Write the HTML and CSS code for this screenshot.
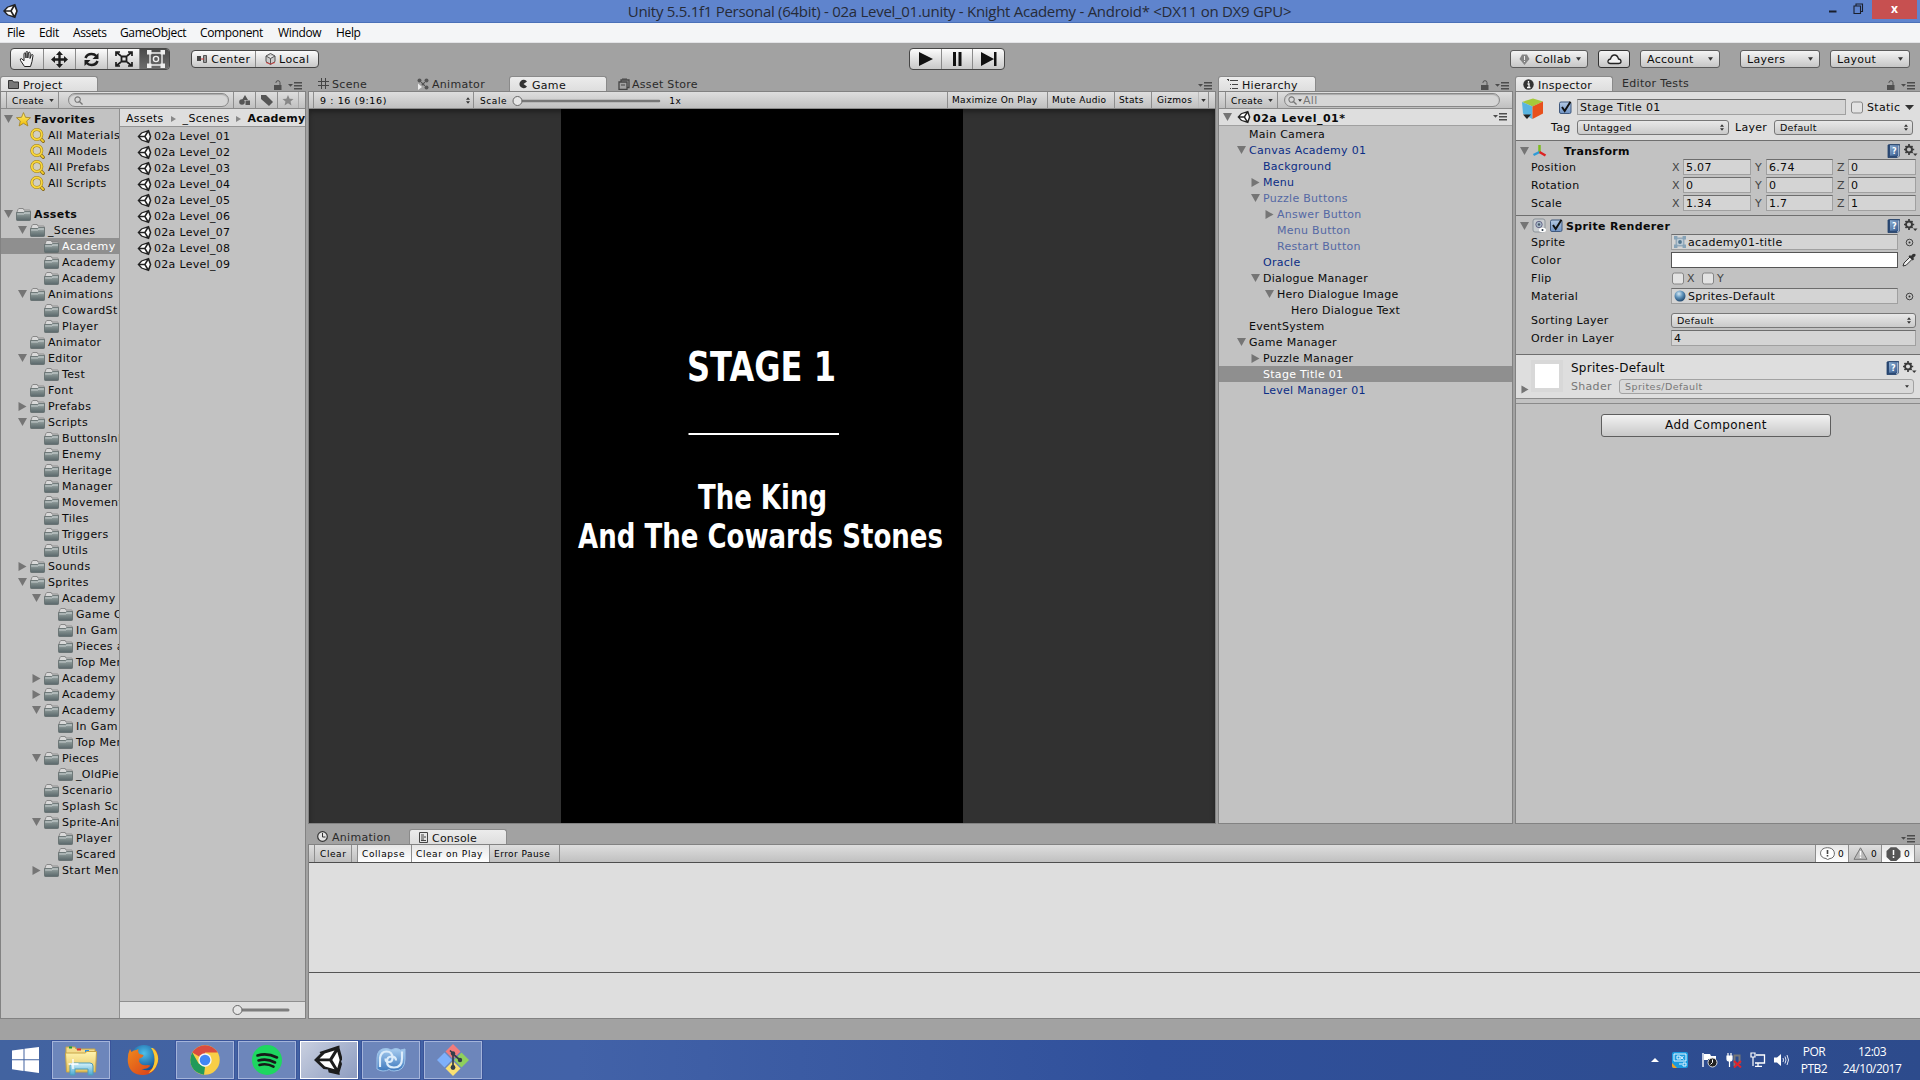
FILE: index.html
```html
<!DOCTYPE html>
<html lang="en">
<head>
<meta charset="utf-8">
<title>Unity 5.5.1f1 Personal (64bit) - Knight Academy</title>
<link rel="stylesheet" href="styles.css">
</head>
<body>
<svg class="defs" width="0" height="0">
  <defs>
    <linearGradient id="gFolder" x1="0" y1="0" x2="0" y2="1"><stop offset="0" stop-color="#a9b3b3"/><stop offset=".5" stop-color="#7b8888"/><stop offset="1" stop-color="#59676a"/></linearGradient>
    <linearGradient id="gStar" x1="0" y1="0" x2="0" y2="1"><stop offset="0" stop-color="#fff27a"/><stop offset="1" stop-color="#f0b800"/></linearGradient>
    <linearGradient id="gCheck" x1="0" y1="0" x2="0" y2="1"><stop offset="0" stop-color="#b4c9e4"/><stop offset="1" stop-color="#6f93c4"/></linearGradient>
    <radialGradient id="gBall" cx=".4" cy=".3" r=".7"><stop offset="0" stop-color="#d4e8f4"/><stop offset=".5" stop-color="#5f93bb"/><stop offset="1" stop-color="#234a70"/></radialGradient>
    <linearGradient id="gBook" x1="0" y1="0" x2="1" y2="1"><stop offset="0" stop-color="#8fb0d4"/><stop offset="1" stop-color="#34588c"/></linearGradient>
    <linearGradient id="gPaper" x1="0" y1="0" x2="0" y2="1"><stop offset="0" stop-color="#fff3b0"/><stop offset="1" stop-color="#e5c45c"/></linearGradient>
    <radialGradient id="gGlobe" cx=".5" cy=".3" r=".7"><stop offset="0" stop-color="#4cc0ea"/><stop offset="1" stop-color="#0b3c86"/></radialGradient>
    <linearGradient id="gFox" x1="0" y1="0" x2="1" y2="1"><stop offset="0" stop-color="#f08a1c"/><stop offset="1" stop-color="#d8391a"/></linearGradient>
    <linearGradient id="gMono" x1="0" y1="0" x2="0" y2="1"><stop offset="0" stop-color="#a8cdf0"/><stop offset="1" stop-color="#3d78bd"/></linearGradient>
    <linearGradient id="gTable" x1="0" y1="0" x2="0" y2="1"><stop offset="0" stop-color="#d6f3fb"/><stop offset="1" stop-color="#4aa8cf"/></linearGradient>
  </defs>
  <symbol id="folder" viewBox="0 0 15 13"><path d="M1 4 2 1.500 2.800.5h4.400l.8 1.600h5.400q.9 0 .9 1V5H1z" fill="#d9d9d9" stroke="#777" stroke-width=".8"/><path d="M.5 4.500h7L8.600 3.500h5.900v8.200q0 .8-.8.8H1.300q-.8 0-.8-.8z" fill="url(#gFolder)" stroke="#5f6b6b" stroke-width=".8"/><path d="M1.200 6h6.500l1.200-.9h5" stroke="#cfd6d6" stroke-width=".8" fill="none"/></symbol>
  <symbol id="down" viewBox="0 0 9 8"><path d="M0 0h9L4.500 8z" fill="#757575"/></symbol>
  <symbol id="right" viewBox="0 0 9 9"><path d="M.5 0 8.500 4.500.5 9z" fill="#757575"/></symbol>
  <symbol id="find" viewBox="0 0 15 15"><path d="m9.500 9.500 3.800 3.800" stroke="#8a6a14" stroke-width="3.200" stroke-linecap="round"/><path d="m9.500 9.500 3.600 3.600" stroke="#f5cf2e" stroke-width="1.800" stroke-linecap="round"/><circle cx="6.800" cy="6.500" r="5" fill="#d2cfc2" stroke="#9a7a1c" stroke-width="3"/><circle cx="6.800" cy="6.500" r="5" fill="none" stroke="#f8d63b" stroke-width="1.900"/></symbol>
  <symbol id="star" viewBox="0 0 15 15"><path d="m7.500.6 2 4.700 5 .4-3.800 3.300 1.200 5-4.400-2.700L3.100 14l1.200-5L.5 5.700l5-.4z" fill="url(#gStar)" stroke="#a08223" stroke-width=".8"/></symbol>
  <symbol id="unity" viewBox="0 0 16 16"><path d="M.5 8 4.500 3.700 12.800.8 15.300 8l-2.500 7.200-8.300-2.900z" fill="#222"/><path d="M3.200 7.200 5.700 4.600l4.600-1.300-2.400 3.900zM3.200 8.800h4.700l2.400 3.900-4.600-1.300zM9.400 8l2.600-4.200L13.600 8 12 12.200z" fill="#fff"/></symbol>
  <symbol id="unitybig" viewBox="0 0 30 30"><path d="M0 15 6.500 8.500 5.500 7 23.500 1 25.500.5V3L28 12v3L27 16l1 3-2.500 8.500.2 2.500-11-2.500-.7-3L9.500 24z" fill="#1c1c1c"/><path d="M5.500 13.500 10.800 8.500 20.500 5.500 15.500 13.500zM5.500 16.300h10l5 8-9.500-2.700zM18.300 15l5-8.300L25.600 15l-2.300 8.300z" fill="#fff"/></symbol>
  <symbol id="lock" viewBox="0 0 8 10"><path d="M0 5h7.500v5H0z" fill="#4f4f4f"/><path d="M2 3V2.500Q2 .7 4 .7t2 2V5" stroke="#4f4f4f" fill="none"/></symbol>
  <symbol id="pmenu" viewBox="0 0 14 8"><path d="M0 2h5L2.500 4.800zM6 0h8v1.500H6zM6 3h8v1.500H6zM6 6h8v1.500H6z" fill="#4c4c4c"/></symbol>
  <symbol id="updn" viewBox="0 0 5 8"><path d="M0 3 2.500 0 5 3zM0 5l2.500 3L5 5z" fill="#333"/></symbol>
  <symbol id="tri" viewBox="0 0 6 4"><path d="M0 0h6L3 4z" fill="#333"/></symbol>
  <symbol id="lens" viewBox="0 0 10 10"><circle cx="4" cy="4" r="3" fill="none" stroke="#777" stroke-width="1.200"/><path d="m6.300 6.300 3.200 3.200" stroke="#777" stroke-width="1.500"/></symbol>
  <symbol id="book" viewBox="0 0 13 14"><path d="M1 1 4 .3h8.500V12L10 13.700H1z" fill="#2c4a75" stroke="#223f68" stroke-width=".8"/><path d="M3 1.200h8.800v10.500H3z" fill="url(#gBook)"/><path d="M11.800 1.500V12L10 13.200" stroke="#e4ebf3" stroke-width=".8" fill="none"/><text x="7.200" y="9.500" text-anchor="middle" class="help-q">?</text></symbol>
  <symbol id="gear" viewBox="0 0 14 13"><circle cx="5" cy="5.500" r="3" fill="none" stroke="#3a3a3a" stroke-width="1.900"/><path d="M5 0v2.500M5 8.500V11M0 5.500h2M8 5.500h2.200M1.500 2 3 3.500M7 7.500 8.600 9M8.500 2 7 3.500M3 7.500 1.500 9" stroke="#3a3a3a" stroke-width="1.700"/><path d="M9 9.500h4.500L11.200 12z" fill="#3a3a3a"/></symbol>
  <symbol id="on" viewBox="0 0 13 13"><rect x=".5" y="1" width="11.500" height="11.500" rx="1.500" fill="url(#gCheck)" stroke="#3f587d"/><path d="m3 6 2.700 4L11.500.8" stroke="#111" stroke-width="2" fill="none"/></symbol>
  <symbol id="off" viewBox="0 0 13 13"><rect x=".5" y="1" width="11" height="11" rx="2" fill="#e3e3e3" stroke="#858585"/></symbol>
  <symbol id="sprite" viewBox="0 0 14 14"><path d="M2.500 2.500h9v9h-9z" fill="#bccbd6" stroke="#7590a6"/><path d="M0 0h4v4H0zM10 0h4v4h-4zM0 10h4v4H0zM10 10h4v4h-4z" fill="#86a3b8"/><circle cx="7" cy="7" r="2.200" fill="#51758f"/></symbol>
  <symbol id="pick" viewBox="0 0 9 9"><circle cx="4.500" cy="4.500" r="3.300" fill="none" stroke="#333" stroke-width=".9"/><circle cx="4.500" cy="4.500" r="1" fill="#333"/></symbol>
</svg>

<header class="titlebar">
  <svg class="t-logo" width="17" height="16"><use href="#unity"/></svg>
  <h1>Unity 5.5.1f1 Personal (64bit) - 02a Level_01.unity - Knight Academy - Android* &lt;DX11 on DX9 GPU&gt;</h1>
  <svg class="win" width="45" height="23" viewBox="0 0 45 23"><path d="M2 11.500h7.500" stroke="#1a1f2c" stroke-width="2"/><path d="M27 6h6.500v7.500H27zM29 6V4h6.500v7.500h-2" fill="none" stroke="#1a1f2c" stroke-width="1.100"/></svg>
  <span class="close">x</span>
</header>
<nav class="menubar"><span class="m1">File</span><span class="m2">Edit</span><span class="m3">Assets</span><span class="m4">GameObject</span><span class="m5">Component</span><span class="m6">Window</span><span>Help</span></nav>

<div class="toolbar">
  <div class="group tools">
    <b><svg width="18" height="17" viewBox="0 0 18 17"><path d="M5.500 15.500 1.500 9.500 1.300 8l1.200-.4L5 9.800V3q0-1 .8-1t.9 1l.3 4V1.500q0-1 .9-1t.9 1V7l.6-5q.2-.8 1-.8t.8 1L11 7.500 12.300 4q.4-.8 1.100-.5t.6 1.100L13 10.500l-1.500 5z" fill="#f4f4f4" stroke="#222"/></svg></b>
    <b><svg width="17" height="17" viewBox="0 0 17 17"><path d="M8.500 0 12 4H9.700v3.300H13V5l4 3.500-4 3.500V9.700H9.700V13H12l-3.500 4L5 13h2.300V9.700H4V12L0 8.500 4 5v2.300h3.300V4H5z" fill="#1d1d1d"/></svg></b>
    <b><svg width="17" height="15" viewBox="0 0 17 15"><path d="M2.500 6Q4 2 8.500 2q3 0 4.800 2M14.500 9Q13 13 8.500 13q-3 0-4.800-2" fill="none" stroke="#1d1d1d" stroke-width="2.600"/><path d="M15.500 1v6h-6zM1.500 14V8h6z" fill="#1d1d1d"/></svg></b>
    <b><svg width="18" height="16" viewBox="0 0 18 16"><path d="M6.500 5.500h5v5h-5z" fill="none" stroke="#1d1d1d" stroke-width="1.800"/><path d="M1 5V1h4M1 1l5 4M17 5V1h-4M17 1l-5 4M1 11v4h4M1 15l5-4M17 11v4h-4M17 15l-5-4" fill="none" stroke="#1d1d1d" stroke-width="1.700"/></svg></b>
    <b class="sel"><svg width="18" height="18" viewBox="0 0 18 18"><path d="M3 3h12v12H3z" fill="none" stroke="#eee" stroke-width="1.400"/><path d="M0 0h4.500v4.500H0zM13.500 0H18v4.500h-4.500zM0 13.500h4.500V18H0zM13.500 13.500H18V18h-4.500z" fill="#eee"/><circle cx="9" cy="9" r="2.600" fill="none" stroke="#eee" stroke-width="1.400"/></svg></b>
  </div>
  <div class="group pivot">
    <b><svg width="11" height="9" viewBox="0 0 11 9"><path d="M0 1h4v5H0z" fill="#444"/><path d="M6.500.5h3v7h-3z" fill="#999" stroke="#555"/><path d="M4 4h3" stroke="#c33"/></svg>Center</b>
    <b><svg width="11" height="12" viewBox="0 0 11 12"><path d="M5.500.5 10 3v5.500l-4.500 3L1 8.500V3zM1 3l4.500 2.500L10 3M5.500 5.500v6" fill="#ccc" stroke="#555"/><path d="M1 9.500q4.500 3 9 0" stroke="#c44" fill="none"/></svg>Local</b>
  </div>
  <div class="group play">
    <b><svg width="15" height="14"><path d="M1 0 15 7 1 14z" fill="#111"/></svg></b>
    <b><svg width="10" height="14"><path d="M1 0h3v14H1zM6.500 0h3v14h-3z" fill="#111"/></svg></b>
    <b><svg width="16" height="14"><path d="M0 0 13 7 0 14zM13 0h2.500v14H13z" fill="#111"/></svg></b>
  </div>
  <div class="drops">
    <span class="drop collab"><svg width="11" height="11" viewBox="0 0 11 11"><path d="M5.500 11 .5 5 3 .5h5L10.500 5z" fill="#858585"/><path d="M5.500 2v4M5.500 7v1" stroke="#eee"/></svg>Collab<svg width="5" height="4"><use href="#tri"/></svg></span>
    <span class="drop cloud"><svg width="15" height="11" viewBox="0 0 15 11"><path d="M3.500 9.500q-3-.2-2.500-2.500.5-1.800 2.500-2Q4.500 1 7.500 1q3 0 4 4 2.500.3 2.500 2.500 0 2-2.500 2z" fill="#f2f2f2" stroke="#222" stroke-width="1.300"/></svg></span>
    <span class="drop wide acc">Account<svg width="5" height="4"><use href="#tri"/></svg></span>
    <span class="drop wide lay">Layers<svg width="5" height="4"><use href="#tri"/></svg></span>
    <span class="drop wide">Layout<svg width="5" height="4"><use href="#tri"/></svg></span>
  </div>
</div>

<main class="work">
  <section class="dock project">
    <div class="tabs">
      <span class="tab active"><svg width="11" height="9" viewBox="0 0 11 9"><path d="M.5 8.500v-8h4l1 1.500h5v6.500z" fill="#777" stroke="#333"/></svg>Project</span>
      <span class="ends"><svg width="8" height="10"><use href="#lock"/></svg><svg width="14" height="8"><use href="#pmenu"/></svg></span>
    </div>
    <div class="panel">
      <div class="bar">
        <span class="btn create">Create<svg width="5" height="3"><use href="#tri"/></svg></span>
        <span class="search"><svg width="9" height="9"><use href="#lens"/></svg></span>
        <span class="btn ico"><svg width="12" height="11" viewBox="0 0 12 11"><path d="M6 0 3 5h6zM6.500 5.500h4.500V10H6.500z" fill="#555"/><circle cx="3" cy="7" r="2.800" fill="#555"/></svg></span>
        <span class="btn ico"><svg width="12" height="11" viewBox="0 0 12 11"><path d="M0 0h5l7 7-4 4-8-7z" fill="#555"/></svg></span>
        <span class="btn ico last"><svg width="12" height="11" viewBox="0 0 15 15"><path d="m7.500 0 2.200 5 5.300.4-4 3.500 1.200 5.300L7.500 11.400l-4.700 2.800L4 8.900 0 5.400 5.300 5z" fill="#888"/></svg></span>
      </div>
      <div class="split">
        <div class="tree">
          <div class="row l0 bold"><i><svg width="9" height="8"><use href="#down"/></svg></i><svg class="ic" width="15" height="15"><use href="#star"/></svg>Favorites</div>
          <div class="row l1"><i></i><svg class="ic" width="15" height="15"><use href="#find"/></svg>All Materials</div>
          <div class="row l1"><i></i><svg class="ic" width="15" height="15"><use href="#find"/></svg>All Models</div>
          <div class="row l1"><i></i><svg class="ic" width="15" height="15"><use href="#find"/></svg>All Prefabs</div>
          <div class="row l1 gapafter"><i></i><svg class="ic" width="15" height="15"><use href="#find"/></svg>All Scripts</div>
          <div class="row l0 bold"><i><svg width="9" height="8"><use href="#down"/></svg></i><svg class="ic" width="15" height="13"><use href="#folder"/></svg>Assets</div>
          <div class="row l1"><i><svg width="9" height="8"><use href="#down"/></svg></i><svg class="ic" width="15" height="13"><use href="#folder"/></svg>_Scenes</div>
          <div class="row l2 selected"><i></i><svg class="ic" width="15" height="13"><use href="#folder"/></svg>Academy</div>
          <div class="row l2"><i></i><svg class="ic" width="15" height="13"><use href="#folder"/></svg>Academy</div>
          <div class="row l2"><i></i><svg class="ic" width="15" height="13"><use href="#folder"/></svg>Academy</div>
          <div class="row l1"><i><svg width="9" height="8"><use href="#down"/></svg></i><svg class="ic" width="15" height="13"><use href="#folder"/></svg>Animations</div>
          <div class="row l2"><i></i><svg class="ic" width="15" height="13"><use href="#folder"/></svg>CowardSt</div>
          <div class="row l2"><i></i><svg class="ic" width="15" height="13"><use href="#folder"/></svg>Player</div>
          <div class="row l1"><i></i><svg class="ic" width="15" height="13"><use href="#folder"/></svg>Animator</div>
          <div class="row l1"><i><svg width="9" height="8"><use href="#down"/></svg></i><svg class="ic" width="15" height="13"><use href="#folder"/></svg>Editor</div>
          <div class="row l2"><i></i><svg class="ic" width="15" height="13"><use href="#folder"/></svg>Test</div>
          <div class="row l1"><i></i><svg class="ic" width="15" height="13"><use href="#folder"/></svg>Font</div>
          <div class="row l1"><i><svg width="9" height="9"><use href="#right"/></svg></i><svg class="ic" width="15" height="13"><use href="#folder"/></svg>Prefabs</div>
          <div class="row l1"><i><svg width="9" height="8"><use href="#down"/></svg></i><svg class="ic" width="15" height="13"><use href="#folder"/></svg>Scripts</div>
          <div class="row l2"><i></i><svg class="ic" width="15" height="13"><use href="#folder"/></svg>ButtonsInM</div>
          <div class="row l2"><i></i><svg class="ic" width="15" height="13"><use href="#folder"/></svg>Enemy</div>
          <div class="row l2"><i></i><svg class="ic" width="15" height="13"><use href="#folder"/></svg>Heritage</div>
          <div class="row l2"><i></i><svg class="ic" width="15" height="13"><use href="#folder"/></svg>Manager</div>
          <div class="row l2"><i></i><svg class="ic" width="15" height="13"><use href="#folder"/></svg>Movement</div>
          <div class="row l2"><i></i><svg class="ic" width="15" height="13"><use href="#folder"/></svg>Tiles</div>
          <div class="row l2"><i></i><svg class="ic" width="15" height="13"><use href="#folder"/></svg>Triggers</div>
          <div class="row l2"><i></i><svg class="ic" width="15" height="13"><use href="#folder"/></svg>Utils</div>
          <div class="row l1"><i><svg width="9" height="9"><use href="#right"/></svg></i><svg class="ic" width="15" height="13"><use href="#folder"/></svg>Sounds</div>
          <div class="row l1"><i><svg width="9" height="8"><use href="#down"/></svg></i><svg class="ic" width="15" height="13"><use href="#folder"/></svg>Sprites</div>
          <div class="row l2"><i><svg width="9" height="8"><use href="#down"/></svg></i><svg class="ic" width="15" height="13"><use href="#folder"/></svg>Academy</div>
          <div class="row l3"><i></i><svg class="ic" width="15" height="13"><use href="#folder"/></svg>Game O</div>
          <div class="row l3"><i></i><svg class="ic" width="15" height="13"><use href="#folder"/></svg>In Gam</div>
          <div class="row l3"><i></i><svg class="ic" width="15" height="13"><use href="#folder"/></svg>Pieces a</div>
          <div class="row l3"><i></i><svg class="ic" width="15" height="13"><use href="#folder"/></svg>Top Men</div>
          <div class="row l2"><i><svg width="9" height="9"><use href="#right"/></svg></i><svg class="ic" width="15" height="13"><use href="#folder"/></svg>Academy</div>
          <div class="row l2"><i><svg width="9" height="9"><use href="#right"/></svg></i><svg class="ic" width="15" height="13"><use href="#folder"/></svg>Academy</div>
          <div class="row l2"><i><svg width="9" height="8"><use href="#down"/></svg></i><svg class="ic" width="15" height="13"><use href="#folder"/></svg>Academy</div>
          <div class="row l3"><i></i><svg class="ic" width="15" height="13"><use href="#folder"/></svg>In Gam</div>
          <div class="row l3"><i></i><svg class="ic" width="15" height="13"><use href="#folder"/></svg>Top Men</div>
          <div class="row l2"><i><svg width="9" height="8"><use href="#down"/></svg></i><svg class="ic" width="15" height="13"><use href="#folder"/></svg>Pieces</div>
          <div class="row l3"><i></i><svg class="ic" width="15" height="13"><use href="#folder"/></svg>_OldPie</div>
          <div class="row l2"><i></i><svg class="ic" width="15" height="13"><use href="#folder"/></svg>Scenario</div>
          <div class="row l2"><i></i><svg class="ic" width="15" height="13"><use href="#folder"/></svg>Splash Sc</div>
          <div class="row l2"><i><svg width="9" height="8"><use href="#down"/></svg></i><svg class="ic" width="15" height="13"><use href="#folder"/></svg>Sprite-Ani</div>
          <div class="row l3"><i></i><svg class="ic" width="15" height="13"><use href="#folder"/></svg>Player</div>
          <div class="row l3"><i></i><svg class="ic" width="15" height="13"><use href="#folder"/></svg>Scared</div>
          <div class="row l2"><i><svg width="9" height="9"><use href="#right"/></svg></i><svg class="ic" width="15" height="13"><use href="#folder"/></svg>Start Menu</div>
        </div>
        <div class="files">
          <div class="crumbs">Assets<svg width="5" height="6"><path d="M0 0l5 3-5 3z" fill="#888"/></svg>_Scenes<svg width="5" height="6"><path d="M0 0l5 3-5 3z" fill="#888"/></svg><b>Academy</b></div>
          <div class="list">
            <div class="row"><svg width="15" height="15"><use href="#unity"/></svg>02a Level_01</div>
            <div class="row"><svg width="15" height="15"><use href="#unity"/></svg>02a Level_02</div>
            <div class="row"><svg width="15" height="15"><use href="#unity"/></svg>02a Level_03</div>
            <div class="row"><svg width="15" height="15"><use href="#unity"/></svg>02a Level_04</div>
            <div class="row"><svg width="15" height="15"><use href="#unity"/></svg>02a Level_05</div>
            <div class="row"><svg width="15" height="15"><use href="#unity"/></svg>02a Level_06</div>
            <div class="row"><svg width="15" height="15"><use href="#unity"/></svg>02a Level_07</div>
            <div class="row"><svg width="15" height="15"><use href="#unity"/></svg>02a Level_08</div>
            <div class="row"><svg width="15" height="15"><use href="#unity"/></svg>02a Level_09</div>
          </div>
          <div class="foot"><svg width="58" height="12" viewBox="0 0 58 12"><path d="M6 6h50" stroke="#7d7d7d" stroke-width="3" stroke-linecap="round"/><circle cx="5.500" cy="6" r="4.500" fill="#e6e6e6" stroke="#666"/></svg></div>
        </div>
      </div>
    </div>
  </section>

  <div class="rest">
    <div class="upper">
      <section class="dock game">
        <div class="tabs">
          <span class="tab t1"><svg width="11" height="11" viewBox="0 0 11 11"><path d="M3.500 0v11M7.500 0v11M0 3.500h11M0 7.500h11" stroke="#444"/></svg>Scene</span>
          <span class="tab t2"><svg width="12" height="12" viewBox="0 0 12 12"><circle cx="2.500" cy="2.500" r="2" fill="#555"/><circle cx="9.500" cy="2.500" r="2" fill="#555"/><circle cx="9.500" cy="9.500" r="2" fill="#555"/><circle cx="6" cy="6" r="1.500" fill="#555"/><path d="m2.500 2.500 7 7M9.500 2.500 6 6" stroke="#555"/><path d="m1 5.500 4 3.500-4 3z" fill="#eee"/></svg>Animator</span>
          <span class="tab t3 active"><svg width="9" height="10" viewBox="0 0 9 10"><path d="M8 2.500A4.200 4.200 0 1 0 8 7.500L4.500 5z" fill="#333"/></svg>Game</span>
          <span class="tab t4"><svg width="12" height="12" viewBox="0 0 12 12"><path d="M1 4h8v7.500H1zM3 4V2h8v7.500H9" fill="none" stroke="#444" stroke-width="1.300"/><path d="M3 7h4M4 1h5" stroke="#444"/></svg>Asset Store</span>
          <span class="ends"><svg width="14" height="8"><use href="#pmenu"/></svg></span>
        </div>
        <div class="panel">
          <div class="bar">
            <span class="btn aspect">9 : 16 (9:16)<svg width="4" height="7"><use href="#updn"/></svg></span>
            <span class="scale">Scale<svg width="152" height="12" viewBox="0 0 152 12"><path d="M6 6h141" stroke="#777" stroke-width="2.500" stroke-linecap="round"/><circle cx="5.500" cy="6" r="4.500" fill="#e6e6e6" stroke="#666"/></svg>1x</span>
            <span class="btn maxi">Maximize On Play</span><span class="btn mute">Mute Audio</span><span class="btn stats">Stats</span><span class="btn giz">Gizmos</span><span class="btn giza"><svg width="5" height="3"><use href="#tri"/></svg></span>
          </div>
          <div class="view">
            <svg width="402" height="714" viewBox="0 0 402 714">
              <rect width="402" height="714" fill="#000"/>
              <g class="stage">
                <text x="126" y="272" textLength="149" lengthAdjust="spacingAndGlyphs" font-size="41">STAGE 1</text>
                <text x="137" y="400" textLength="129" lengthAdjust="spacingAndGlyphs" font-size="33.500">The King</text>
                <text x="17" y="438.500" textLength="365" lengthAdjust="spacingAndGlyphs" font-size="33.500">And The Cowards Stones</text>
              </g>
              <path d="M127.500 325h150.500" stroke="#fff" stroke-width="2"/>
            </svg>
          </div>
        </div>
      </section>

      <section class="dock hier">
        <div class="tabs">
          <span class="tab active"><svg width="11" height="10" viewBox="0 0 11 10"><path d="M0 .5h2M3 1.500h8M3 5.500h1M5 5.500h6M3 9.500h1M5 9.500h6M1.500 1v1" stroke="#444"/></svg>Hierarchy</span>
          <span class="ends"><svg width="8" height="10"><use href="#lock"/></svg><svg width="14" height="8"><use href="#pmenu"/></svg></span>
        </div>
        <div class="panel">
          <div class="bar">
            <span class="btn create">Create<svg width="5" height="3"><use href="#tri"/></svg></span>
            <span class="search"><svg width="9" height="9"><use href="#lens"/></svg><svg width="4" height="3"><use href="#tri"/></svg>All</span>
          </div>
          <div class="scene"><svg width="9" height="8"><use href="#down"/></svg><svg width="14" height="14"><use href="#unity"/></svg><b>02a Level_01*</b><svg width="14" height="8"><use href="#pmenu"/></svg></div>
          <div class="objs">
            <div class="row l0"><i></i>Main Camera</div>
            <div class="row l0 pf"><i><svg width="9" height="8"><use href="#down"/></svg></i>Canvas Academy 01</div>
            <div class="row l1 pf"><i></i>Background</div>
            <div class="row l1 pf"><i><svg width="9" height="9"><use href="#right"/></svg></i>Menu</div>
            <div class="row l1 pf dim"><i><svg width="9" height="8"><use href="#down"/></svg></i>Puzzle Buttons</div>
            <div class="row l2 pf dim"><i><svg width="9" height="9"><use href="#right"/></svg></i>Answer Button</div>
            <div class="row l2 pf dim"><i></i>Menu Button</div>
            <div class="row l2 pf dim"><i></i>Restart Button</div>
            <div class="row l1 pf"><i></i>Oracle</div>
            <div class="row l1"><i><svg width="9" height="8"><use href="#down"/></svg></i>Dialogue Manager</div>
            <div class="row l2"><i><svg width="9" height="8"><use href="#down"/></svg></i>Hero Dialogue Image</div>
            <div class="row l3"><i></i>Hero Dialogue Text</div>
            <div class="row l0"><i></i>EventSystem</div>
            <div class="row l0"><i><svg width="9" height="8"><use href="#down"/></svg></i>Game Manager</div>
            <div class="row l1"><i><svg width="9" height="9"><use href="#right"/></svg></i>Puzzle Manager</div>
            <div class="row l1 selected"><i></i>Stage Title 01</div>
            <div class="row l1 pf"><i></i>Level Manager 01</div>
          </div>
        </div>
      </section>

      <section class="dock insp">
        <div class="tabs">
          <span class="tab active"><svg width="11" height="11" viewBox="0 0 11 11"><circle cx="5.500" cy="5.500" r="5.200" fill="#333"/><path d="M5.500 2v1.800M4.500 5h1.500v3.500M4 8.500h3.500" stroke="#fff" stroke-width="1.300" fill="none"/></svg>Inspector</span>
          <span class="tab">Editor Tests</span>
          <span class="ends"><svg width="8" height="10"><use href="#lock"/></svg><svg width="14" height="8"><use href="#pmenu"/></svg></span>
        </div>
        <div class="panel">
          <div class="head">
            <svg class="cube" width="23" height="23" viewBox="0 0 23 23"><path d="M1 4 12 .5 22 3.500 11.500 8.500z" fill="#a5c83b"/><path d="M1 4l10.500 4.500v12.700L2 15.500z" fill="#58b4e0"/><path d="M22 3.500v12L11.500 21V8.500z" fill="#e8501c"/><path d="M2 16.500h8L6 21z" fill="#222"/></svg>
            <div class="hl"><svg width="13" height="13"><use href="#on"/></svg><span class="field name">Stage Title 01</span><svg width="13" height="13"><use href="#off"/></svg><span class="static">Static</span><svg width="9" height="5" viewBox="0 0 9 5"><path d="M0 0h9L4.500 5z" fill="#333"/></svg></div>
            <div class="hl two"><span class="tag">Tag</span><span class="popup p1">Untagged<svg width="4" height="7"><use href="#updn"/></svg></span><span class="layer">Layer</span><span class="popup p2">Default<svg width="4" height="7"><use href="#updn"/></svg></span></div>
          </div>
          <div class="comp transform">
            <div class="ctitle"><svg width="9" height="8"><use href="#down"/></svg><svg width="15" height="14" viewBox="0 0 15 14"><path d="M7.500 8V1" stroke="#7dbb1c" stroke-width="2.500"/><path d="m7.500 8-6 3" stroke="#2d9bd8" stroke-width="2.500"/><path d="m7.500 8 6 3.500" stroke="#d22" stroke-width="2.500"/></svg><b class="far">Transform</b><svg width="13" height="14"><use href="#book"/></svg><svg width="14" height="13"><use href="#gear"/></svg></div>
            <div class="prop xyz"><span>Position</span><em>X</em><span class="field">5.07</span><em>Y</em><span class="field">6.74</span><em>Z</em><span class="field">0</span></div>
            <div class="prop xyz"><span>Rotation</span><em>X</em><span class="field">0</span><em>Y</em><span class="field">0</span><em>Z</em><span class="field">0</span></div>
            <div class="prop xyz"><span>Scale</span><em>X</em><span class="field">1.34</span><em>Y</em><span class="field">1.7</span><em>Z</em><span class="field">1</span></div>
          </div>
          <div class="comp renderer">
            <div class="ctitle"><svg width="9" height="8"><use href="#down"/></svg><svg width="15" height="15" viewBox="0 0 15 15"><rect x="1" y="1" width="12" height="13" rx="2" fill="#c9cdd0" stroke="#8b9399"/><circle cx="7" cy="6.500" r="3.200" fill="#a8bac8" stroke="#668"/><circle cx="7" cy="6.500" r="1.200" fill="#456"/><ellipse cx="10.500" cy="12" rx="3.500" ry="2.200" fill="#fff"/><circle cx="10.500" cy="12" r="1" fill="#234"/></svg><svg class="ck" width="13" height="13"><use href="#on"/></svg><b>Sprite Renderer</b><svg width="13" height="14"><use href="#book"/></svg><svg width="14" height="13"><use href="#gear"/></svg></div>
            <div class="prop"><span>Sprite</span><span class="field"><svg width="12" height="12"><use href="#sprite"/></svg>academy01-title</span><svg width="9" height="9"><use href="#pick"/></svg></div>
            <div class="prop"><span>Color</span><span class="swatch"></span><svg width="14" height="14" viewBox="0 0 14 14"><path d="m1 13 1-3 6-6 2.200 2.200-6 6z" fill="#eee" stroke="#333"/><path d="M6.500 3.500 8 2l1 1q2-3 4-2t-1.800 4l1 1-1.500 1.500z" fill="#333"/></svg></div>
            <div class="prop flip"><span>Flip</span><svg width="13" height="13"><use href="#off"/></svg><em>X</em><svg width="13" height="13"><use href="#off"/></svg><em>Y</em></div>
            <div class="prop"><span>Material</span><span class="field"><svg width="12" height="12" viewBox="0 0 12 12"><circle cx="6" cy="6" r="5.500" fill="url(#gBall)"/></svg>Sprites-Default</span><svg width="9" height="9"><use href="#pick"/></svg></div>
            <div class="prop full sort"><span>Sorting Layer</span><span class="popup">Default<svg width="4" height="7"><use href="#updn"/></svg></span></div>
            <div class="prop full"><span>Order in Layer</span><span class="field">4</span></div>
          </div>
          <div class="mat">
            <svg class="mtri" width="8" height="9"><use href="#right"/></svg>
            <span class="thumb"></span>
            <div class="mtext"><div class="mrow"><span>Sprites-Default</span><svg width="13" height="14"><use href="#book"/></svg><svg width="14" height="13"><use href="#gear"/></svg></div>
            <div class="mrow shader"><span>Shader</span><span class="popup off">Sprites/Default<svg width="4" height="3"><use href="#tri"/></svg></span></div></div>
          </div>
          <div class="sep"></div>
          <div class="add">Add Component</div>
        </div>
      </section>
    </div>

    <section class="dock console">
      <div class="tabs">
        <span class="tab t5"><svg width="11" height="11" viewBox="0 0 11 11"><circle cx="5.500" cy="5.500" r="4.800" fill="#e4e4e4" stroke="#333" stroke-width="1.200"/><path d="M5.500 2v4h3" stroke="#333" fill="none"/></svg>Animation</span>
        <span class="tab t6 active"><svg width="10" height="11" viewBox="0 0 10 11"><path d="M.5.5h8v10h-8zM2 3h3M2 5h5M2 7h3M2 8.500h5" fill="none" stroke="#444"/></svg>Console</span>
        <span class="ends"><svg width="14" height="8"><use href="#pmenu"/></svg></span>
      </div>
      <div class="panel">
        <div class="bar"><span class="btn c1">Clear</span><span class="btn c2 lit">Collapse</span><span class="btn c3 lit">Clear on Play</span><span class="btn c4">Error Pause</span>
          <span class="btn cnt lit first"><svg width="15" height="13" viewBox="0 0 15 13"><path d="M7.500.7c9 0 8.500 10.600 2.500 10.800L7.500 12.600 6 11.500C-1.500 11-1.500.7 7.500.7z" fill="#fff" stroke="#666"/><path d="M7.500 3v4M7.500 8v1.500" stroke="#444" stroke-width="1.600"/></svg>0</span><span class="btn cnt"><svg width="15" height="13" viewBox="0 0 15 13"><path d="M7.500.8 14 12.300H1z" fill="#bbb" stroke="#777"/><path d="M7.500 4v4.500M7.500 9.500V11" stroke="#fff" stroke-width="1.400"/></svg>0</span><span class="btn cnt lit"><svg width="15" height="14" viewBox="0 0 15 14"><path d="M4.700.3h5.600L14.500 4v6l-4.200 3.900H4.700L.5 10V4z" fill="#555"/><path d="M7.500 3v5M7.500 9.300V11" stroke="#fff" stroke-width="1.500"/></svg>0</span>
        </div>
        <div class="log"></div>
        <div class="detail"></div>
      </div>
    </section>
  </div>
</main>
<div class="status"></div>

<footer class="taskbar">
  <div class="start"><svg width="27" height="26" viewBox="0 0 27 26"><path d="M0 3.500 11.500 2v10.300H0zM12.500 1.800 27 0v12.300H12.500zM0 13.300h11.500V24L0 22.300zM12.500 13.300H27V26l-14.500-2z" fill="#fff"/></svg></div>
  <div class="app run"><svg width="34" height="32" viewBox="0 0 34 32"><path d="M2 7V3h9l1 2h19v6H2z" fill="#f3dc8c" stroke="#c6a446"/><path d="M5 2.500h3v2H5z" fill="#1c9c3c"/><path d="M13 4.500h4v2h-4z" fill="#d33"/><path d="M21 6h4v2h-4z" fill="#2b8ee0"/><path d="M1.500 9h20l1-1.500h10L31.500 28H2.500z" fill="url(#gPaper)" stroke="#c6a446"/><path d="M6 31V22q0-3 3-3h17q3 0 3 3v9h-5v-6H11v6z" fill="url(#gTable)" stroke="#4d9dbd"/><path d="M9 15v10M4.500 20h10" stroke="#fff" stroke-width="1.300"/></svg></div>
  <div class="app"><svg width="32" height="32" viewBox="0 0 32 32"><circle cx="17" cy="15" r="14" fill="url(#gGlobe)"/><path d="M27 4q6 7 3.500 15Q27 31 16 31 3 31 1 19 0 11 3 5l1.500 3q2-2 5-2l2-1q-1 3 1 5l4 1q0 2-4 3.500l-.5 3q3 5 8.500 3.500l3 .5q-3 4-9 3.500Q24 29 27 21q2-7-1-13l2 1z" fill="url(#gFox)"/><path d="M26 4q7 7 4.500 15-2.500 8-9 10Q27 24 27.500 17 28 9 24 4z" fill="#f9c934"/></svg></div>
  <div class="app run"><svg width="30" height="30" viewBox="0 0 30 30"><circle cx="15" cy="15" r="14.700" fill="#f8ce46"/><path d="M15 15 2.300 7.600A14.700 14.700 0 0 1 27.700 7.600H15z" fill="#d94b3f"/><path d="M2.300 7.600 8.600 18.500 15 22l-1 7.700A14.700 14.700 0 0 1 2.300 7.600z" fill="#229a5a"/><circle cx="15" cy="15" r="6.700" fill="#f5f5f5"/><circle cx="15" cy="15" r="5.300" fill="#4286f4"/></svg></div>
  <div class="app run"><svg width="30" height="30" viewBox="0 0 30 30"><circle cx="15" cy="15" r="15" fill="#1ed760"/><path d="M5.500 10.500Q15 7.500 25 12.500M6.500 15.500Q15 13 23 17.500M7.500 20Q15 18 21.500 21.700" fill="none" stroke="#161b18" stroke-width="2.600" stroke-linecap="round"/></svg></div>
  <div class="app run cur"><svg width="30" height="30"><use href="#unitybig"/></svg></div>
  <div class="app run"><svg width="30" height="26" viewBox="0 0 30 26"><path d="M1 22V11Q1 1.500 10 1.500q3 0 5 1.500 3-1.500 5-1.500 3 .3 4.500 1.500L29 2v10q0 12-11 12-3 0-5-1.500-2 1.500-6 1.500-3 0-6-2z" fill="url(#gMono)" stroke="#9cc2e8"/><path d="M4 20v-9q1-6.500 6.500-6.500 6 0 6 6.500 0 4-3.500 4t-3.500-3.500M26 4.500v7q0 9-8 9-7 0-7-6 0-5 4.500-5t4.500 4" fill="none" stroke="#dcecfa" stroke-width="2.200"/></svg></div>
  <div class="app run"><svg width="32" height="32" viewBox="0 0 32 32"><path d="m16 0 7.500 7.500L16 15 8.500 7.500z" fill="#f27c7c"/><path d="m24.500 8.500 7.500 7.500-7.500 7.500L17 16z" fill="#8fd05c"/><path d="m7.500 8.500L15 16l-7.500 7.500L0 16z" fill="#7eb0fb"/><path d="m16 17 7.500 7.500L16 32l-7.500-7.500z" fill="#fae072"/><path d="M13 6.500 16 9.500V24M16 10l7 6" stroke="#333e4a" stroke-width="1.700" fill="none"/><circle cx="16" cy="9.500" r="2.200" fill="#333e4a"/><circle cx="23" cy="16" r="2.200" fill="#333e4a"/><circle cx="16" cy="23.500" r="2.400" fill="#333e4a"/></svg></div>
  <div class="tray">
    <svg width="8" height="4"><path d="M0 4 4 0l4 4z" fill="#fff"/></svg>
    <svg width="16" height="16" viewBox="0 0 16 16"><rect width="16" height="16" rx="2" fill="#1b9be0"/><path d="M2 2h12v7H2zM5 4h3v3H5zM8.500 4l3 3.500M11.500 4l-3 3.500M7 12h3M11 11h3v3h-3z" fill="none" stroke="#e8f6ff"/><path d="M0 11l5 5H2q-2 0-2-2z" fill="#f4a11c"/></svg>
    <svg width="16" height="16" viewBox="0 0 16 16"><path d="M1 1v14" stroke="#fff" stroke-width="1.400"/><path d="M2 2h6l1 2h5v3H6V8H2z" fill="#fff"/><circle cx="10.500" cy="10.500" r="4.500" fill="#222" stroke="#ddd"/><path d="M10.500 7.500v3l-2 2" stroke="#fff" fill="none"/></svg>
    <svg width="16" height="16" viewBox="0 0 16 16"><path d="M1 4h5v3q0 2-2.500 2T1 7zM2 1v3M5 1v3M3.500 9v6" stroke="#fff" stroke-width="1.200" fill="#fff"/><path d="M8.500 14V3.500h5V12" fill="none" stroke="#777" stroke-width="2"/><path d="m8 9 7 6.500M15 9l-7 6.500" stroke="#e0242c" stroke-width="2"/></svg>
    <svg width="16" height="16" viewBox="0 0 16 16"><path d="M6 3h8.500v8H5M8 11v3M5 14.300h7" stroke="#fff" stroke-width="1.300" fill="none"/><path d="M1 1h4v4H1zM3 5v9" stroke="#fff" fill="none" stroke-width="1.200"/></svg>
    <svg width="16" height="14" viewBox="0 0 16 14"><path d="M0 4.500h3L7 1v12L3 9.500H0z" fill="#fff"/><path d="M9 5q1 2 0 4M11 3.500q2 3.500 0 7M13 2q3 5 0 10" stroke="#dfe5f5" fill="none"/></svg>
    <span class="lang">POR<br>PTB2</span>
    <span class="clock">12:03<br>24/10/2017</span>
  </div>
</footer>
</body>
</html>
```
FILE: styles.css
```css
* { box-sizing: border-box; }
body { margin: 0; width: 1920px; height: 1080px; overflow: hidden; display: flex; flex-direction: column; background: #a2a2a2; color: #0a0a0a; font: 11px "DejaVu Sans", Verdana, sans-serif; letter-spacing: .3px; white-space: nowrap; }
svg { flex: none; display: block; }
em { font-style: normal; }
.defs { position: absolute; }
.help-q { font: bold 8px "DejaVu Sans", sans-serif; fill: #fff; letter-spacing: 0; }

.titlebar { height: 23px; flex: none; background: #5f84cd; border-bottom: 1px solid #4a70b8; display: flex; align-items: flex-start; }
.t-logo { margin: 3px 0 0 2px; }
.titlebar h1 { margin: 0; flex: 1; padding-left: 73px; text-align: center; font: 15px/23px "Open Sans", "Noto Sans", sans-serif; letter-spacing: -.28px; color: #262b38; }
.close { width: 45px; height: 19px; margin: 0 3px 0 0; background: #c75050; color: #fff; text-align: center; font: bold 12px/17px "Open Sans", sans-serif; }
.menubar { height: 20px; flex: none; background: #f4f5f7; border-bottom: 1px solid #e2e3e6; display: flex; padding-left: 7px; font: 12px/20px "Open Sans", "Noto Sans", sans-serif; letter-spacing: -.35px; color: #000; }
.m1 { width: 32px; } .m2 { width: 34px; } .m3 { width: 47px; } .m4 { width: 80px; } .m5 { width: 78px; } .m6 { width: 58px; }

.toolbar { height: 33px; flex: none; display: flex; align-items: flex-start; padding: 5px 10px 0; }
.group { display: flex; border: 1px solid #464646; border-radius: 4px; overflow: hidden; background: linear-gradient(#fbfbfb, #c8c8c8); }
.group b { font-weight: normal; display: flex; align-items: center; justify-content: center; border-left: 1px solid #8a8a8a; }
.group b:first-child { border-left: 0; }
.tools { width: 160px; height: 22px; }
.tools b { width: 32px; flex: none; }
.tools b:first-child { padding-left: 1px; }
.play b { flex: 1; }
.tools .sel { background: linear-gradient(#4a4a4a, #6c6c6c); }
.pivot { width: 128px; height: 18px; margin: 2px 0 0 21px; }
.pivot b { flex: 1; gap: 3px; padding-left: 1px; letter-spacing: .35px; }
.play { width: 96px; height: 22px; margin-left: 590px; }
.drops { display: flex; margin: 2px 0 0 auto; }
.drop { height: 18px; border: 1px solid #5c5c5c; border-radius: 3px; background: linear-gradient(#f4f4f4, #c6c6c6); display: flex; align-items: center; justify-content: space-between; padding: 0 6px; }
.collab { width: 78px; padding: 0 6px 0 8px; margin-right: 10px; }
.cloud { width: 32px; justify-content: center; border-color: #333; margin-right: 10px; }
.wide { width: 80px; }
.acc { margin-right: 20px; } .lay { margin-right: 10px; }

.work { height: 943px; flex: none; display: flex; gap: 2px; }
.rest { flex: 1; min-width: 0; display: flex; flex-direction: column; justify-content: space-between; }
.dock { display: flex; flex-direction: column; }
.project { width: 306px; }
.upper { height: 748px; display: flex; }
.game { width: 908px; margin-right: 2px; }
.hier { width: 295px; margin-right: 2px; }
.insp { flex: 1; min-width: 0; }
.console { height: 190px; }

.tabs { height: 15px; flex: none; display: flex; align-items: flex-start; }
.tab { height: 15px; width: 98px; display: flex; align-items: center; padding: 2px 0 0 8px; gap: 4px; color: #2a2a2a; }
.tab svg { margin-top: -2px; }
.tab.active { background: linear-gradient(#ececec, #dedede); border: 1px solid #8a8a8a; border-bottom: 0; border-radius: 3px 3px 0 0; padding: 2px 0 0 7px; color: #111; }
.ends { margin-left: auto; align-self: flex-end; display: flex; align-items: flex-end; gap: 6px; padding: 0 4px 1px 0; }
.t1 { padding-left: 10px; width: 101px; gap: 3px; } .t2 { width: 100px; gap: 3px; } .t3.active { padding-left: 9px; } .t4 { padding-left: 11px; gap: 2px; width: 110px; }
.t5 { width: 101px; padding-left: 9px; } .t6.active { padding-left: 9px; gap: 3px; letter-spacing: .2px; }
.insp .tab.active + .tab { padding: 0 0 0 9px; }
.insp .ends, .console .ends { padding-right: 5px; }
.panel { flex: 1; min-height: 0; display: flex; flex-direction: column; border: 1px solid #828282; background: #c2c2c2; }
.bar { height: 17px; flex: none; display: flex; align-items: stretch; background: linear-gradient(#dedede, #c0c0c0); border-bottom: 1px solid #8b8b8b; font-size: 9px; letter-spacing: .35px; color: #000; }
.btn { border-left: 1px solid #8e8e8e; display: flex; align-items: center; }
.create { width: 53px; padding: 1px 4px 0 5px; margin-left: 5px; justify-content: space-between; border-right: 1px solid #8e8e8e; }
.search { width: 161px; height: 14px; margin: 1px 4px 0 9px; border: 1px solid #888; border-radius: 7px; background: #d6d6d6; display: flex; align-items: center; padding-left: 5px; box-shadow: inset 0 1px 1px #aaa; gap: 1px; font-size: 11px; color: #777; }
.ico { width: 22px; justify-content: center; }
.ico.last { border-right: 1px solid #aaa; }

.split { flex: 1; min-height: 0; display: flex; }
.tree { width: 119px; border-right: 1px solid #8f8f8f; overflow: hidden; padding-top: 2px; letter-spacing: .35px; }
.row { height: 16px; display: flex; align-items: center; padding-top: 2px; line-height: 14px; }
.row svg { margin-top: -2px; }
.row i { width: 12px; flex: none; display: flex; }
.tree .ic { margin-right: 3px; }
.tree .l0 { padding-left: 3px; }
.tree .l1 { padding-left: 17px; }
.tree .l2 { padding-left: 31px; }
.tree .l3 { padding-left: 45px; }
.bold { font-weight: bold; letter-spacing: .4px; }
.gapafter { margin-bottom: 15px; }
.selected { background: #8f8f8f; color: #fff; }
.files { flex: 1; min-width: 0; display: flex; flex-direction: column; }
.crumbs { height: 18px; background: #dedede; border-bottom: 1px solid #959595; display: flex; align-items: center; padding: 2px 0 0 6px; gap: 7px; overflow: hidden; }
.crumbs b { margin-left: -1px; letter-spacing: .2px; }
.list { flex: 1; padding: 1px 0 0 17px; }
.list .row { gap: 2px; }
.foot { height: 17px; background: #dedede; border-top: 1px solid #8f8f8f; display: flex; align-items: center; justify-content: flex-end; padding-right: 15px; }

.aspect { width: 161px; margin-left: 4px; padding: 0 3px 0 6px; justify-content: space-between; border-right: 1px solid #8e8e8e; font-size: 9.500px; letter-spacing: .6px; }
.scale { flex: 1; display: flex; align-items: center; gap: 5px; padding: 1px 0 0 6px; letter-spacing: .6px; }
.maxi { width: 100px; padding-left: 4px; } .mute { width: 67px; padding-left: 4px; } .stats { width: 37px; padding-left: 4px; } .giz { width: 47px; padding-left: 5px; } .giza { width: 11px; border-right: 1px solid #8e8e8e; border-left-color: #bbb; padding-left: 2px; margin-right: 6px; }
.view { flex: 1; background: #313131; padding-left: 252px; box-shadow: inset 0 3px 5px #202020; }
.stage { font-family: "DejaVu Sans", sans-serif; font-weight: bold; fill: #fff; letter-spacing: 0; }

.hier .create { margin-left: 6px; }
.hier .search { flex: 1; margin: 1px 12px 0 6px; padding-left: 3px; }
.hier .tab.active { padding-left: 8px; }
.scene { height: 17px; flex: none; background: #dedede; border-bottom: 1px solid #a0a0a0; display: flex; align-items: center; padding: 0 5px 0 4px; gap: 5px; }
.scene b { margin-left: -3px; padding-top: 2px; flex: 1; letter-spacing: .5px; }
.objs .l0 { padding-left: 18px; } .objs .l1 { padding-left: 32px; } .objs .l2 { padding-left: 46px; } .objs .l3 { padding-left: 60px; }
.objs .row { letter-spacing: .28px; }
.pf { color: #0b2d85; }
.dim { color: #5468a4; }

.insp .panel { border-right: 0; }
.head { height: 48px; flex: none; display: grid; grid-template-columns: 35px 1fr; grid-template-rows: 20px 16px; row-gap: 2px; padding: 5px 0 0 5px; background: #dedede; }
.cube { grid-row: 1 / 3; margin-top: 1px; }
.hl { display: flex; align-items: center; padding-left: 3px; }
.two { padding-left: 0; margin-left: -5px; }
.field { height: 16px; border: 1px solid #a0a0a0; border-top-color: #6d6d6d; background: #d4d4d4; padding-left: 2px; line-height: 15px; display: flex; align-items: center; }
.name { width: 269px; margin: 0 5px; }
.static { width: 38px; margin-left: 3px; }
.tag { width: 26px; }
.layer { width: 33px; padding-left: 6px; margin-right: 6px; box-sizing: content-box; }
.popup { height: 15px; border: 1px solid #777; border-radius: 3px; background: linear-gradient(#e8e8e8, #cacaca); display: flex; align-items: center; justify-content: space-between; padding: 0 4px 0 5px; font-size: 9.500px; }
.p1 { width: 152px; } .p2 { width: 139px; }
.comp { border-top: 1px solid #6f6f6f; padding: 1px 0 0 5px; flex: none; }
.transform { height: 75px; } .renderer { height: 139px; }
.ctitle { height: 16px; display: flex; align-items: center; gap: 3px; padding: 2px 2px 0 0; margin-left: -1px; }
.ctitle b { flex: 1; letter-spacing: .35px; }
.ctitle .far { padding-left: 14px; }
.ctitle .ck { margin-left: 0; }
.ctitle svg:last-child { margin-left: 1px; }
.ctitle svg { margin-top: -1px; }
.prop { height: 18px; display: grid; grid-template-columns: 140px 227px 1fr; align-items: center; padding-left: 10px; justify-items: stretch; }
.prop > svg { justify-self: start; margin-left: 7px; }
.prop .swatch + svg { margin-left: 4px; }
.prop .field svg { margin: 0 2px 0 0; }
.xyz { grid-template-columns: 141px 11px 68px 15px 67px 15px 68px; }
.xyz em:nth-of-type(n+2) { padding-left: 4px; }
.prop em { color: #444; }
.swatch { height: 16px; border: 1px solid #555; background: #fff; }
.flip { grid-template-columns: 140px 16px 14px 16px 14px; }
.flip > svg { margin-left: 1px; }
.full { grid-template-columns: 140px 245px; }
.sort { margin-top: 6px; }
.mat { height: 45px; flex: none; background: #dedede; border-top: 1px solid #6f6f6f; border-bottom: 1px solid #8a8a8a; display: flex; padding-left: 5px; }
.mtri { align-self: flex-end; margin-bottom: 4px; }
.thumb { width: 24px; height: 24px; background: #fff; margin: 9px 12px 0 6px; outline: 4px solid #d8d8d8; }
.mtext { flex: 1; padding-top: 4px; }
.mrow { display: flex; align-items: center; gap: 4px; height: 17px; padding-right: 3px; font-size: 12px; letter-spacing: .25px; }
.mrow > span:first-child { flex: 1; }
.shader { font-size: 11px; height: 15px; margin-top: 3px; color: #777; gap: 0; padding-right: 6px; letter-spacing: .3px; }
.popup.off { width: 295px; border-color: #a2a2a2; background: #d9d9d9; color: #777; letter-spacing: .45px; }
.sep { height: 5px; flex: none; border-bottom: 1px solid #8a8a8a; }
.add { width: 230px; height: 23px; flex: none; margin: 10px 0 0 85px; border: 1px solid #5e5e5e; border-radius: 3px; background: linear-gradient(#f2f2f2, #c8c8c8); text-align: center; font-size: 12px; line-height: 20px; letter-spacing: .4px; }

.console .panel { background: #dedede; border-right: 0; }
.console .bar { border-bottom: 1px solid #4d4d4d; height: 18px; letter-spacing: .6px; }
.c1 { width: 38px; margin-left: 5px; padding-left: 5px; border-right: 1px solid #8e8e8e; margin-right: 5px; }
.c2 { width: 54px; padding-left: 4px; } .c3 { width: 78px; padding-left: 4px; } .c4 { width: 71px; padding-left: 4px; border-right: 1px solid #8e8e8e; letter-spacing: .45px; }
.btn.lit { background: linear-gradient(#e6e6e6, #fff); }
.first { margin-left: auto; }
.cnt { width: 33px; padding-left: 4px; gap: 3px; }
.cnt:last-child { border-right: 1px solid #8e8e8e; margin-right: 5px; width: 34px; }
.log { height: 110px; border-bottom: 1px solid #555; }

.status { height: 21px; flex: none; background: #a2a2a2; }
.taskbar { height: 40px; flex: none; display: flex; align-items: center; gap: 4px; background: linear-gradient(90deg, #4263a0, #4262a8 30%, #30509b 60%, #2d4b8c); }
.start { width: 48px; padding-left: 12px; }
.app { width: 58px; height: 38px; display: flex; align-items: center; justify-content: center; }
.run { background: #6d86bb; border: 1px solid #a4b4da; outline: 1px solid #3a549a; outline-offset: 0; }
.run.cur { background: linear-gradient(135deg, #c9d0e0, #8d9cc0); border-color: #fff; }
.tray { margin-left: auto; display: flex; align-items: center; gap: 8px; padding-right: 18px; color: #fff; font: 12px/17px "Open Sans", sans-serif; letter-spacing: -.5px; text-align: center; }
.tray svg:nth-of-type(1) { margin-right: 5px; }
.tray svg:nth-of-type(2) { margin-right: 6px; }
.lang { width: 30px; margin-left: 1px; }
.clock { width: 60px; margin-left: 5px; }
```
